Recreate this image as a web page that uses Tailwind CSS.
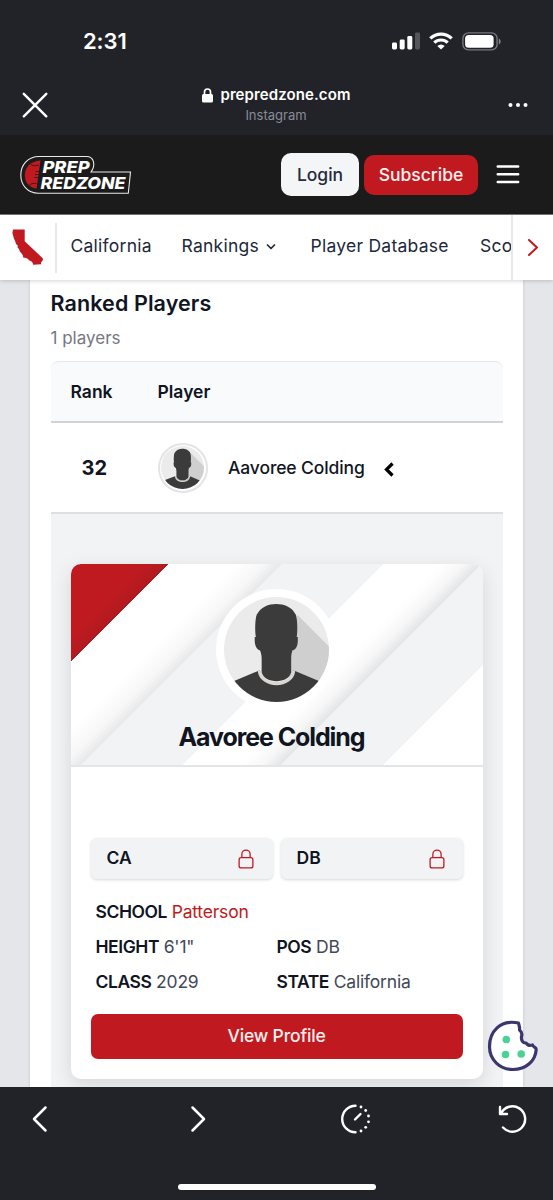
<!DOCTYPE html>
<html lang="en">
<head>
    <meta charset="UTF-8">
    <meta name="viewport" content="width=device-width, initial-scale=1.0">
    <title>Prep Redzone - Ranked Players</title>
    <script src="https://cdn.jsdelivr.net/npm/@tailwindcss/browser@4"></script>
</head>
<body class="relative flex h-[1200px] w-[553px] flex-col overflow-hidden bg-[#e5e6ea] font-['Inter',sans-serif] text-[#10151f]">

<!-- status bar + in-app browser bar -->
<div class="h-[135px] shrink-0 bg-[#222328] text-white">
    <div class="flex h-[82px] items-center justify-between pl-[83px] pr-[52px]">
        <span class="text-[22px] font-semibold tracking-[-0.1px]">2:31</span>
        <div class="flex items-center gap-[9px]">
            <svg class="h-[18px] w-[28px]" viewBox="0 0 28 18">
                <rect x="0" y="10.5" width="5" height="7" rx="1.4" fill="#fff"/>
                <rect x="7.7" y="7.5" width="5" height="10" rx="1.4" fill="#fff"/>
                <rect x="15.3" y="4" width="5" height="13.5" rx="1.4" fill="#fff"/>
                <rect x="23" y="0.5" width="5" height="17" rx="1.4" fill="#55565a"/>
            </svg>
            <svg class="h-[18px] w-[24px]" viewBox="0 0 24 18" fill="none" stroke="#fff" stroke-width="3.2">
                <path d="M1.3 6.4A15.3 15.3 0 0 1 22.7 6.4"/>
                <path d="M5.3 10.7A9.6 9.6 0 0 1 18.7 10.7"/>
                <path d="M12 17.6L8.3 13.9A5.3 5.3 0 0 1 15.7 13.9Z" fill="#fff" stroke="none"/>
            </svg>
            <svg class="h-[19px] w-[39px]" viewBox="0 0 39 19">
                <rect x="0.9" y="0.9" width="34.2" height="17" rx="5.5" fill="none" stroke="#77787d" stroke-width="1.4"/>
                <rect x="3.1" y="3" width="28.5" height="12.8" rx="3.6" fill="#fff"/>
                <path d="M36.8 6.5c2.4 1 2.4 5 0 6z" fill="#85868a"/>
            </svg>
        </div>
    </div>
    <div class="flex h-[46px] items-center justify-between pl-[22px] pr-[25px]">
        <svg class="h-[26px] w-[26px]" viewBox="0 0 26 26" stroke="#fff" stroke-width="2.4" stroke-linecap="round">
            <path d="M1.8 1.8L24.3 24.3M24.3 1.8L1.8 24.3"/>
        </svg>
        <div class="flex flex-col items-center pr-[3px]">
            <div class="flex items-center gap-[7px]">
                <svg class="h-[15px] w-[11px]" viewBox="0 0 11 15">
                    <rect x="0" y="6" width="11" height="8.5" rx="1.5" fill="#fff"/>
                    <path d="M2.5 7V4a3 3 0 0 1 6 0v3" fill="none" stroke="#fff" stroke-width="1.7"/>
                </svg>
                <span class="text-[15px] font-semibold leading-[20px] tracking-[0.1px]">prepredzone.com</span>
            </div>
            <span class="pr-[1px] text-[13px] leading-[20px] text-[#878b97]">Instagram</span>
        </div>
        <svg class="h-[6px] w-[20px]" viewBox="0 0 20 6" fill="#fff">
            <circle cx="2.5" cy="3" r="2"/><circle cx="10" cy="3" r="2"/><circle cx="17.5" cy="3" r="2"/>
        </svg>
    </div>
</div>

<!-- site header -->
<header class="flex h-[80px] shrink-0 items-center border-b border-[#77787a] bg-[#1b1b1b] pl-[20px] pr-[33px]">
    <svg class="h-[40px] w-[112px]" viewBox="0 0 112 40">
        <path d="M19 1.5H66.500C74 1.5 76 10 71 17H110.5L108.300 38.300H18.500C7 38.300 0.800 29.500 0.800 20S7.500 1.500 19 1.500Z" fill="#1b1b1b" stroke="#e9e9e9" stroke-width="1.1"/>
        <path d="M20.500 5.500C10 6.500 4.800 12.500 4.800 20S9 32.500 16.500 33.500L18.500 20Z" fill="#c01a20"/>
        <path d="M11 9.500c2 1.500 5 1.500 8 0.500M8.500 31c2-2.500 5-3 8-2.500M15.500 16.500h3.500M15 19.500h3.500M14.500 22.500h3.500" fill="none" stroke="#1b1b1b" stroke-width="0.8"/>
        <text x="22.5" y="18" textLength="47" lengthAdjust="spacingAndGlyphs" font-size="16.5" font-weight="800" font-style="italic" fill="#fff">PREP</text>
        <text x="20.5" y="33.5" textLength="85" lengthAdjust="spacingAndGlyphs" font-size="16.5" font-weight="800" font-style="italic" fill="#fff">REDZONE</text>
    </svg>
    <div class="ml-auto flex items-center">
        <button class="h-[43px] w-[78px] rounded-[10px] bg-[#f3f5f7] pt-[1px] text-[17.5px] font-medium text-[#252b38]">Login</button>
        <button class="ml-[5px] h-[40px] w-[114px] rounded-[10px] bg-[#c01a20] pt-[1px] text-[17.5px] font-medium text-[#fff0ef]">Subscribe</button>
        <svg class="ml-[18px] h-[20px] w-[24px]" viewBox="0 0 24 20" stroke="#fff" stroke-width="2.4" stroke-linecap="round">
            <path d="M1.7 1.500H22.200M1.7 9.300H22.200M1.7 17H22.200"/>
        </svg>
    </div>
</header>

<!-- state nav -->
<nav class="relative z-10 flex h-[65px] shrink-0 items-center bg-white text-[17.5px] text-[#20283a] shadow-[0_1px_4px_rgba(0,0,0,0.18)]">
    <div class="flex h-[50px] w-[57px] shrink-0 items-center border-r-2 border-[#e7e8eb] pb-[2px] pl-[12px]">
        <svg class="h-[36px] w-[32px]" viewBox="0 0 32 36" fill="#c01a20">
            <path d="M1 0.5H12.700V12.300L30.700 29.200L31 31L29 33.500L29.200 35.300L21.200 35.800C20.800 33 19.500 32 17 31.200C16.200 29.500 13.500 28.800 11.200 28.600C11.300 26 9.700 24.500 7.800 22.500C7.600 20.500 6.700 19.500 5.500 18.500L5.800 16.500C4.500 15.500 3.500 14.500 3.300 12.500L1.500 8.500C1.800 6.500 0.200 5 0.500 3.500Z"/>
        </svg>
    </div>
    <div class="flex min-w-0 flex-1 items-center overflow-hidden whitespace-nowrap pb-[2px] pl-[13.5px] tracking-[0.25px]">
        <a class="w-[111px] shrink-0">California</a>
        <a class="flex w-[129px] shrink-0 items-center gap-[7px]">Rankings
            <svg class="mt-[1px] h-[8px] w-[10px]" viewBox="0 0 10 8" fill="none" stroke="#20283a" stroke-width="1.7" stroke-linecap="round" stroke-linejoin="round"><path d="M1.5 2L5 5.5L8.5 2"/></svg>
        </a>
        <a class="w-[169.5px] shrink-0">Player Database</a>
        <a class="shrink-0">Scores</a>
    </div>
    <div class="flex h-full w-[42px] shrink-0 items-center justify-center border-l-2 border-[#e7e8eb]">
        <svg class="h-[18px] w-[12px]" viewBox="0 0 12 18" fill="none" stroke="#c01a20" stroke-width="2" stroke-linecap="round" stroke-linejoin="round"><path d="M2 1L10 8.500L2 16"/></svg>
    </div>
</nav>

<main class="mx-[30px] h-[807px] shrink-0 overflow-hidden bg-white px-[20.5px] shadow-[0_0_3px_rgba(0,0,0,0.15)]">
    <h2 class="mt-[7px] text-[21.5px] font-semibold leading-[32px] tracking-[0.1px]">Ranked Players</h2>
    <p class="mt-[7px] text-[17px] leading-[24px] text-[#747782]">1 players</p>

    <div class="mt-[11px] w-[452px]">
        <div class="flex h-[62px] items-center rounded-t-[8px] border-b-2 border-t border-b-[#cfd2d7] border-t-[#e5e7eb] bg-[#f9fafc] pl-[20px] pt-[2px] text-[17.5px] font-semibold">
            <span class="w-[87px]">Rank</span>
            <span>Player</span>
        </div>
        <div class="flex h-[91px] items-center border-b-2 border-[#dddfe3]">
            <span class="w-[107px] pl-[31px] pt-[1px] text-[20px] font-bold">32</span>
            <div class="flex h-[50px] w-[50px] items-center justify-center rounded-full border-2 border-[#e3e4e8] bg-white">
                <svg class="h-[43px] w-[43px] rounded-full bg-[#ebebeb]" viewBox="0 0 106 106">
                    <path d="M74 18L108 52V90L60 80Z" fill="#cfcfcf"/>
                    <path d="M-2 88L36 74C38 91 68 91 70 74L108 90V110H-2Z" fill="#3c3b3b"/>
                    <path d="M35.5 74C37 92 69 92 70.5 74" fill="none" stroke="#d9d6d3" stroke-width="3"/>
                    <path d="M38 76V62C38 58 37 56 36.5 54C33 53 31 49 31 44V40.5H32.2C31 34 31.5 22 33 18C37 10 45 7 52.7 7S69 10 72.5 18C74 22 74.5 34 73.4 40.5H74.5V44C74.5 49 73 53 69 54C68.5 56 67.8 58 67.8 62V76C65 88 41 88 38 76Z" fill="#3c3b3b"/>
                </svg>
            </div>
            <span class="ml-[20.5px] pt-[2px] text-[17.5px] font-medium tracking-[-0.12px]">Aavoree Colding</span>
            <svg class="ml-[19px] mt-[3px] h-[15px] w-[10px]" viewBox="0 0 10 15" fill="none" stroke="#000" stroke-width="3.2"><path d="M8.5 1.5L2.5 7.5L8.5 13.5"/></svg>
        </div>

        <!-- expanded player card -->
        <div class="bg-[#f2f3f5] px-[20px] pb-[30px] pt-[50px]">
            <div class="h-[514.5px] w-[412px] overflow-hidden rounded-[10px] bg-white shadow-[0_6px_20px_rgba(0,0,0,0.12)]">
                <div class="relative h-[203px] border-b-2 border-[#e3e5e9]">
                    <svg class="absolute inset-0 h-[201px] w-[412px]" viewBox="0 0 412 201">
                        <defs>
                            <linearGradient id="bands" gradientUnits="userSpaceOnUse" x1="0" y1="0" x2="307" y2="307">
                                <stop offset="0" stop-color="#c01a20"/>
                                <stop offset="0.12" stop-color="#be1a20"/>
                                <stop offset="0.158" stop-color="#b01b20"/>
                                <stop offset="0.159" stop-color="#fff"/>
                                <stop offset="0.27" stop-color="#fff"/>
                                <stop offset="0.315" stop-color="#f7f7f8"/>
                                <stop offset="0.343" stop-color="#e7e8e9"/>
                                <stop offset="0.344" stop-color="#f2f3f5"/>
                                <stop offset="0.508" stop-color="#f2f3f5"/>
                                <stop offset="0.509" stop-color="#fff"/>
                                <stop offset="0.6" stop-color="#fff"/>
                                <stop offset="0.64" stop-color="#f7f7f8"/>
                                <stop offset="0.668" stop-color="#e4e5e6"/>
                                <stop offset="0.669" stop-color="#f2f3f5"/>
                                <stop offset="0.835" stop-color="#f2f3f5"/>
                                <stop offset="0.836" stop-color="#fff"/>
                            </linearGradient>
                        </defs>
                        <rect width="412" height="201" fill="url(#bands)"/>
                    </svg>
                    <div class="relative flex flex-col items-center pt-[25px]">
                        <div class="rounded-full bg-white p-[8px]">
                            <svg class="h-[105px] w-[105px] rounded-full bg-[#ebebeb]" viewBox="0 0 106 106">
                                <path d="M74 18L108 52V90L60 80Z" fill="#cfcfcf"/>
                                <path d="M-2 90L36 74C38 91 68 91 70 74L108 90V110H-2Z" fill="#3c3b3b"/>
                                <path d="M35.5 74C37 92 69 92 70.5 74" fill="none" stroke="#d9d6d3" stroke-width="3"/>
                                <path d="M38 76V62C38 58 37 56 36.5 54C33 53 31 49 31 44V40.5H32.2C31 34 31.5 22 33 18C37 10 45 7 52.7 7S69 10 72.5 18C74 22 74.5 34 73.4 40.5H74.5V44C74.5 49 73 53 69 54C68.5 56 67.8 58 67.8 62V76C65 88 41 88 38 76Z" fill="#3c3b3b"/>
                            </svg>
                        </div>
                        <h3 class="mt-[11px] pr-[10px] text-[25px] font-bold leading-[32px] tracking-[-1.1px]">Aavoree Colding</h3>
                    </div>
                </div>

                <div class="px-[20px] pt-[71px] text-[17.5px]">
                    <div class="flex gap-[8px]">
                        <div class="flex h-[41px] w-[183px] items-center justify-between rounded-[6px] bg-[#f2f3f5] pl-[16px] pr-[16px] font-semibold shadow-[0_1px_3px_rgba(0,0,0,0.16)]">CA
                            <svg class="h-[22px] w-[22px]" viewBox="0 0 24 24" fill="none" stroke="#c01a20" stroke-width="1.4" stroke-linejoin="round"><path d="M16.5 10.5V6.75a4.5 4.5 0 1 0-9 0v3.75m-.75 11.25h10.5a2.25 2.25 0 0 0 2.25-2.25v-6.75a2.25 2.25 0 0 0-2.25-2.25H6.75a2.25 2.25 0 0 0-2.25 2.25v6.75a2.25 2.25 0 0 0 2.25 2.25Z"/></svg>
                        </div>
                        <div class="flex h-[41px] w-[183px] items-center justify-between rounded-[6px] bg-[#f2f3f5] pl-[16px] pr-[15px] font-semibold shadow-[0_1px_3px_rgba(0,0,0,0.16)]">DB
                            <svg class="h-[22px] w-[22px]" viewBox="0 0 24 24" fill="none" stroke="#c01a20" stroke-width="1.4" stroke-linejoin="round"><path d="M16.5 10.5V6.75a4.5 4.5 0 1 0-9 0v3.75m-.75 11.25h10.5a2.25 2.25 0 0 0 2.25-2.25v-6.75a2.25 2.25 0 0 0-2.25-2.25H6.75a2.25 2.25 0 0 0-2.25 2.25v6.75a2.25 2.25 0 0 0 2.25 2.25Z"/></svg>
                        </div>
                    </div>
                    <div class="mt-[14.5px] grid grid-cols-[181px_1fr] pl-[5px] leading-[35px] tracking-[-0.2px] text-[#414857]">
                        <p class="col-span-2"><b class="font-semibold tracking-[-0.45px] text-[#10151f]">SCHOOL</b> <a class="text-[#c01a20]">Patterson</a></p>
                        <p><b class="font-semibold tracking-[-0.45px] text-[#10151f]">HEIGHT</b> 6'1"</p>
                        <p><b class="font-semibold tracking-[-0.45px] text-[#10151f]">POS</b> DB</p>
                        <p><b class="font-semibold tracking-[-0.45px] text-[#10151f]">CLASS</b> 2029</p>
                        <p><b class="font-semibold tracking-[-0.45px] text-[#10151f]">STATE</b> California</p>
                    </div>
                    <button class="mt-[15px] h-[45px] w-full rounded-[7px] bg-[#c01a20] pt-[1px] font-medium tracking-[-0.15px] text-[#fff0ef]">View Profile</button>
                </div>
            </div>
        </div>
    </div>
</main>

<!-- cookie settings -->
<svg class="absolute left-[486px] top-[1019px] h-[54px] w-[54px]" viewBox="0 0 54 54">
    <path d="M32.5 4C14 0 3.500 13 3.500 27.500C3.500 41 14 50.500 27 50.500C40 50.500 49.500 42 50.200 30.500C50 28 47.500 28.500 46.500 26C43 27 41 25.500 40 24C36.500 24 35 21 35.500 17.500C36.500 14.500 35.500 12.500 33.500 11C34 8.500 33 6.500 32.500 4Z" fill="#fff" stroke="#3b3570" stroke-width="3.2" stroke-linejoin="round"/>
    <g fill="#4bd397"><circle cx="20.3" cy="20.5" r="3.8"/><circle cx="19.5" cy="35.5" r="3.8"/><circle cx="35.2" cy="35" r="3.8"/></g>
</svg>

<!-- bottom toolbar -->
<footer class="relative z-10 flex h-[113px] shrink-0 flex-col items-center bg-[#222328]">
    <div class="flex h-[64px] w-full items-center pl-[31px]">
        <svg class="h-[30px] w-[18px]" viewBox="0 0 18 30" fill="none" stroke="#fff" stroke-width="2.5" stroke-linecap="round" stroke-linejoin="round"><path d="M14.5 3.5L3 15L14.5 26.5"/></svg>
        <svg class="ml-[140px] h-[30px] w-[18px]" viewBox="0 0 18 30" fill="none" stroke="#fff" stroke-width="2.5" stroke-linecap="round" stroke-linejoin="round"><path d="M3.5 3.5L15 15L3.5 26.5"/></svg>
        <svg class="ml-[134px] h-[30px] w-[30px]" viewBox="0 0 30 30" fill="none" stroke="#fff" stroke-width="2.4" stroke-linecap="round">
            <path d="M14.5 1.7A13.300 13.300 0 0 0 14.5 28.300M14 15.500L19.500 10"/>
            <g fill="#fff" stroke="none"><circle cx="20" cy="3" r="1.4"/><circle cx="24.7" cy="6.5" r="1.4"/><circle cx="27.5" cy="12" r="1.4"/><circle cx="27.5" cy="17.8" r="1.4"/><circle cx="24.7" cy="23.3" r="1.4"/><circle cx="20" cy="27" r="1.4"/></g>
        </svg>
        <svg class="ml-[127px] h-[30px] w-[30px]" viewBox="0 0 30 30" fill="none" stroke="#fff" stroke-width="2.4" stroke-linecap="round" stroke-linejoin="round">
            <path d="M2 3V10H9M3 9.500A12.700 12.700 0 1 1 5 23.500"/>
        </svg>
    </div>
    <div class="mt-[33px] h-[6px] w-[198px] rounded-full bg-white"></div>
</footer>

</body>
</html>
